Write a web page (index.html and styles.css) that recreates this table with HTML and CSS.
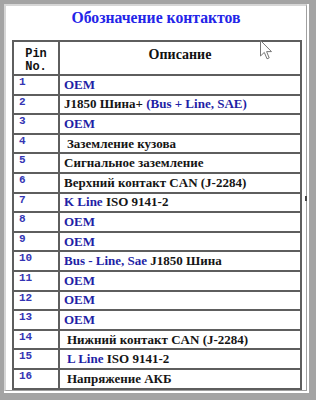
FILE: index.html
```html
<!DOCTYPE html>
<html>
<head>
<meta charset="utf-8">
<link rel="stylesheet" href="styles.css">
</head>
<body>
<div class="window">
  <div class="pane">
    <h1 class="title">Обозначение контактов</h1>
    <table class="pins">
      <thead>
        <tr class="head-row"><th class="pin-head">Pin<br>No.</th><th class="desc-head">Описание</th></tr>
      </thead>
      <tbody>
        <tr><td class="num">1</td><td class="desc"><span class="blue">OEM</span></td></tr>
        <tr><td class="num">2</td><td class="desc">J1850 Шина+ <span class="blue">(Bus + Line, SAE)</span></td></tr>
        <tr><td class="num">3</td><td class="desc"><span class="blue">OEM</span></td></tr>
        <tr><td class="num">4</td><td class="desc ind">Заземление кузова</td></tr>
        <tr><td class="num">5</td><td class="desc">Сигнальное заземление</td></tr>
        <tr><td class="num">6</td><td class="desc">Верхний контакт CAN (J-2284)</td></tr>
        <tr><td class="num">7</td><td class="desc"><span class="blue">K Line</span> ISO 9141-2</td></tr>
        <tr><td class="num">8</td><td class="desc"><span class="blue">OEM</span></td></tr>
        <tr><td class="num">9</td><td class="desc"><span class="blue">OEM</span></td></tr>
        <tr><td class="num">10</td><td class="desc"><span class="blue">Bus - Line, Sae</span> J1850 Шина</td></tr>
        <tr><td class="num">11</td><td class="desc"><span class="blue">OEM</span></td></tr>
        <tr><td class="num">12</td><td class="desc"><span class="blue">OEM</span></td></tr>
        <tr><td class="num">13</td><td class="desc"><span class="blue">OEM</span></td></tr>
        <tr><td class="num">14</td><td class="desc ind">Нижний контакт CAN (J-2284)</td></tr>
        <tr><td class="num">15</td><td class="desc ind"><span class="blue">L Line</span> ISO 9141-2</td></tr>
        <tr><td class="num">16</td><td class="desc ind">Напряжение АКБ</td></tr>
      </tbody>
    </table>
  </div>
  <span class="thumb"></span>
  <svg class="cursor" width="12" height="20" viewBox="0 0 12 20">
    <path d="M0.5 0.5 L0.5 16 L4.3 12.4 L7 18.8 L9.2 17.9 L6.6 11.6 L11.5 11.6 Z" fill="#fff" stroke="#777" stroke-width="1"/>
  </svg>
</div>
</body>
</html>
```
FILE: styles.css
```css
html, body {
  margin: 0;
  padding: 0;
  background: #fff;
  font-family: "Liberation Serif", serif;
}
.window {
  position: relative;
  box-sizing: border-box;
  width: 316px;
  height: 400px;
  border-style: solid;
  border-width: 4px 7px 7px 4px;
  border-color: #a4a4a4;
  padding: 0 2px 2px 0;
  background: #fff;
}
.pane {
  box-sizing: border-box;
  height: 100%;
  border-left: 2px solid #d6d6d6;
  border-top: 2px solid #d6d6d6;
  border-right: 1px solid #a0a0a0;
  border-bottom: 1px solid #a0a0a0;
  padding: 0 0 0 6px;
}
.title {
  margin: 3px 0 0 -6px;
  font-family: "Liberation Serif", serif;
  font-size: 15.7px;
  line-height: 17px;
  font-weight: bold;
  color: #2424e8;
  text-align: center;
}
.pins {
  margin-top: 14px;
  width: 290px;
  border-collapse: collapse;
  border: 2px solid #5a5a5a;
}
.pins th,
.pins td {
  border: 2px solid #5e5e5e;
  padding: 0;
}
.head-row {
  height: 34px;
}
.pins th.pin-head {
  width: 44px;
  padding-top: 6px;
  font-family: "Liberation Mono", monospace;
  font-size: 12px;
  line-height: 13px;
  font-weight: bold;
  color: #111;
  text-align: center;
  vertical-align: top;
}
.pins th.desc-head {
  padding-top: 5px;
  font-family: "Liberation Serif", serif;
  font-size: 14px;
  line-height: 16px;
  font-weight: bold;
  color: #111;
  text-align: center;
  vertical-align: top;
}
.pins tbody tr {
  height: 19.6px;
}
.pins td.num {
  vertical-align: top;
  padding: 1px 0 0 5px;
  font-family: "Liberation Mono", monospace;
  font-size: 11px;
  line-height: 11px;
  font-weight: bold;
  color: #3434b4;
}
.pins td.desc {
  vertical-align: middle;
  padding: 0 0 0 4px;
  font-family: "Liberation Serif", serif;
  font-size: 13px;
  line-height: 14px;
  font-weight: bold;
  color: #151515;
  white-space: nowrap;
}
.pins td.ind {
  padding-left: 7px;
}
.blue {
  color: #1f1fa6;
}
.thumb {
  position: absolute;
  left: 301px;
  top: 192px;
  width: 2px;
  height: 5px;
  background: #444;
}
.cursor {
  position: absolute;
  left: 256px;
  top: 36px;
}
```
